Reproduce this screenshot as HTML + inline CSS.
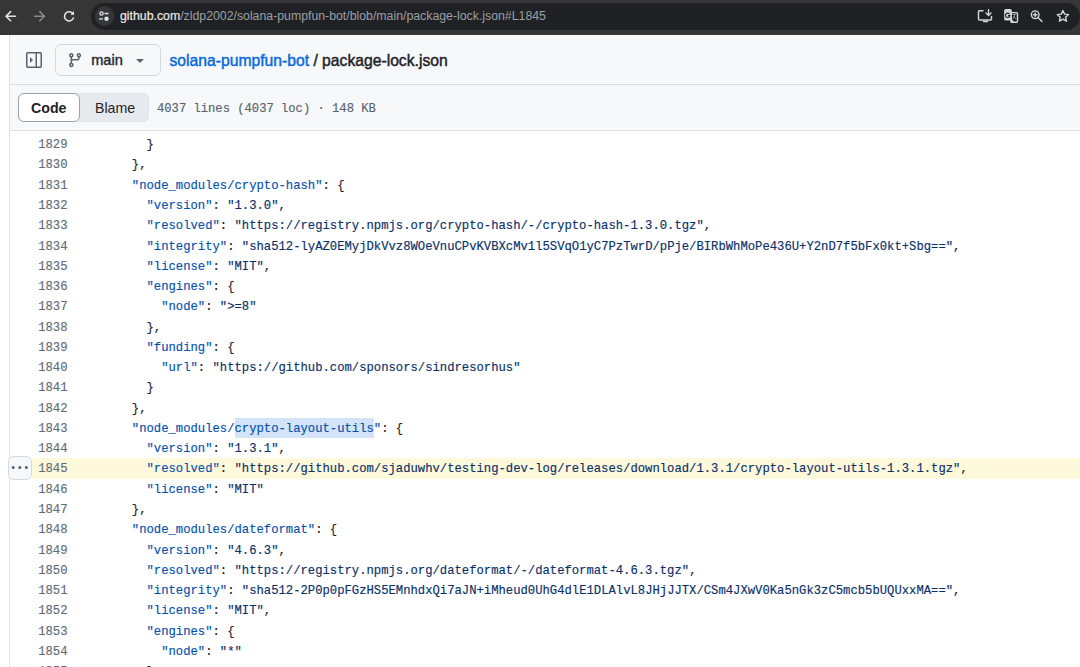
<!DOCTYPE html>
<html><head><meta charset="utf-8">
<style>
*{box-sizing:border-box;margin:0;padding:0}
html,body{width:1080px;height:667px;overflow:hidden;background:#fff;font-family:"Liberation Sans",sans-serif}
svg{position:absolute;overflow:visible}
#chrome{position:absolute;left:0;top:0;width:1080px;height:35px;background:#363636}
#pill{position:absolute;left:91px;top:3px;width:989px;height:27px;border-radius:13.5px;background:#202124}
#site{position:absolute;left:94.5px;top:6.3px;width:19.4px;height:19.4px;border-radius:50%;background:#35363a}
#url{position:absolute;left:120px;top:9px;font-size:12.3px;color:#9aa0a6;white-space:nowrap}
#url b{font-weight:normal;color:#e8e8e8;-webkit-text-stroke:0.2px}
#gh{position:absolute;left:9px;top:35px;width:1071px;height:632px;border-left:1px solid #dfe3e8}
#hdr1{position:absolute;left:0;top:0;width:100%;height:50px;background:#f6f8fa;border-bottom:1px solid #d9dfe5}
#hdr2{position:absolute;left:0;top:50px;width:100%;height:46px;background:#f6f8fa;border-bottom:1px solid #d9dfe5}
#branch{position:absolute;left:45px;top:9px;width:106px;height:32px;border:1px solid #d1d9e0;border-radius:6px;background:#f6f8fa}
#branch .t{position:absolute;left:35.2px;top:7px;font-size:14.6px;color:#25292e;-webkit-text-stroke:0.4px}
#crumb{position:absolute;left:159.5px;top:17px;font-size:15.7px;color:#1f2328;white-space:nowrap;-webkit-text-stroke:0.45px}
#crumb a{color:#0969da;text-decoration:none}
#seg{position:absolute;left:8px;top:8px;width:131px;height:29px;background:#e6eaef;border-radius:6px;box-shadow:inset 0 0 0 1px #dfe4e9}
#codebtn{position:absolute;left:0;top:0;width:61.5px;height:29px;background:#fff;border:1px solid #9aa3ac;border-radius:6px}
#seg .l{position:absolute;top:6.7px;font-size:14.2px;color:#1f2328}
#info{position:absolute;left:147px;top:16.8px;-webkit-text-stroke:0.15px;font-family:"Liberation Mono",monospace;font-size:12.17px;color:#59636e;white-space:nowrap}
#code{position:absolute;left:0;top:99.2px;width:100%;font-family:"Liberation Mono",monospace;font-size:12.22px;line-height:20.28px;-webkit-text-stroke:0.15px}
.r{position:relative;height:20.28px}
.n{position:absolute;left:0;top:1px;width:57.5px;text-align:right;color:#636c76}
.c{position:absolute;left:92.5px;top:1px;color:#1f2328;white-space:pre}
.k{color:#0550ae}
.s{color:#0a3069}
.hl .bg{position:absolute;left:21.5px;top:0;right:0;height:100%;background:#fff9db}
.selbg{position:absolute;left:224.5px;width:139.3px;top:0;height:100%;background:#d3e3f8}
#dots{position:absolute;left:-2px;top:421.3px;width:23.5px;height:24px;border:1px solid #d1d9e0;border-radius:6px;background:#f6f8fa}
#dots svg{left:-1px;top:-1px}
</style></head><body>
<div id="chrome">
  <svg width="1080" height="35" style="left:0;top:0">
    <g fill="none" stroke="#e3e3e3" stroke-width="1.6" stroke-linecap="round" stroke-linejoin="round">
      <path d="M15.5 16.2H6.2M10.6 11.6L6 16.2l4.6 4.6"/>
    </g>
    <g fill="none" stroke="#8a8a8a" stroke-width="1.6" stroke-linecap="round" stroke-linejoin="round">
      <path d="M34.8 16.2H44.2M39.8 11.6l4.6 4.6-4.6 4.6"/>
    </g>
    <g fill="none" stroke="#e3e3e3" stroke-width="1.6" stroke-linecap="round">
      <path d="M73.2 14.2A4.6 4.6 0 1 0 73.4 18"/>
    </g>
    <path d="M70.3 14.8L74 11v3.8z" fill="#e3e3e3"/>
  </svg>
  <div id="pill"></div>
  <div id="site"></div>
  <svg width="20" height="20" style="left:94px;top:6px">
    <g fill="none" stroke="#e3e3e3" stroke-width="1.3">
      <circle cx="7.5" cy="7.5" r="1.6"/>
      <path d="M10.5 7.5h4M5 12.8h4"/>
    </g>
    <circle cx="12.5" cy="12.8" r="2.2" fill="#e3e3e3"/>
  </svg>
  <div id="url"><b>github.com</b>/zldp2002/solana-pumpfun-bot/blob/main/package-lock.json#L1845</div>
  <svg width="110" height="35" style="left:970px;top:0">
    <g fill="none" stroke="#d6d6d6" stroke-width="1.4" stroke-linejoin="round" stroke-linecap="round">
      <path d="M13 10.8H9.5a1 1 0 0 0-1 1v7.2a1 1 0 0 0 1 1h11a1 1 0 0 0 1-1v-2.5"/>
      <path d="M13.5 21.5h4"/>
      <path d="M18.5 9.8v5.5M16 13l2.5 2.5L21 13"/>
      <rect x="34.9" y="9.8" width="6.2" height="10" rx="0.9" fill="#d6d6d6"/>
      <rect x="41.2" y="12.6" width="6.3" height="9.6" rx="0.9"/>
      <path d="M41.2 19.8v2.4h2.2z" fill="#d6d6d6"/>
      <path d="M42.8 14.4h3.2M44.6 14.4c0 2.5-.8 3.8-1.8 4.6M43.6 16.6c.6.8 1.4 1.6 2.4 2.2" stroke-width="0.8" stroke="#b0b0b0"/>
      <circle cx="65.2" cy="14.7" r="3.8"/>
      <path d="M68 17.5l4 4M65.2 13v3.4M63.5 14.7h3.4"/>
      <path d="M92.9 10.5l1.7 3.6 3.9.5-2.9 2.7.8 3.9-3.5-2-3.5 2 .8-3.9-2.9-2.7 3.9-.5z"/>
    </g>
    <path d="M39.6 14.2A2.2 2.2 0 1 0 39.9 15.6H38" fill="none" stroke="#202124" stroke-width="1.1"/>
  </svg>
</div>
<div id="gh">
  <div id="hdr1">
    <svg width="16" height="16" viewBox="0 0 16 16" style="left:16px;top:17px"><path fill="#59636e" d="M6.823 7.823a.25.25 0 0 1 0 .354l-2.396 2.396A.25.25 0 0 1 4 10.396V5.604a.25.25 0 0 1 .427-.177ZM1.75 0h12.5C15.216 0 16 .784 16 1.75v12.5A1.75 1.75 0 0 1 14.25 16H1.75A1.75 1.75 0 0 1 0 14.25V1.75C0 .784.784 0 1.75 0ZM1.5 1.75v12.5c0 .138.112.25.25.25H9.5v-13H1.75a.25.25 0 0 0-.25.25ZM11 14.5h3.25a.25.25 0 0 0 .25-.25V1.75a.25.25 0 0 0-.25-.25H11Z"/></svg>
    <div id="branch"><span class="t">main</span></div>
    <svg width="16.2" height="16.2" viewBox="0 0 16 16" style="left:57.2px;top:16.8px"><path fill="#59636e" d="M9.5 3.25a2.25 2.25 0 1 1 3 2.122V6A2.5 2.5 0 0 1 10 8.5H6a1 1 0 0 0-1 1v1.128a2.251 2.251 0 1 1-1.5 0V5.372a2.25 2.25 0 1 1 1.5 0v1.836A2.493 2.493 0 0 1 6 7h4a1 1 0 0 0 1-1v-.628A2.25 2.25 0 0 1 9.5 3.25Zm-6 0a.75.75 0 1 0 1.5 0 .75.75 0 0 0-1.5 0Zm8.25-.75a.75.75 0 1 0 0 1.5.75.75 0 0 0 0-1.5ZM4.25 12a.75.75 0 1 0 0 1.5.75.75 0 0 0 0-1.5Z"/></svg>
    <svg width="16" height="16" viewBox="0 0 16 16" style="left:121.5px;top:16.5px"><path fill="#59636e" d="m4.427 7.427 3.396 3.396a.25.25 0 0 0 .354 0l3.396-3.396A.25.25 0 0 0 11.396 7H4.604a.25.25 0 0 0-.177.427Z"/></svg>
    <div id="crumb"><a>solana-pumpfun-bot</a> / package-lock.json</div>
  </div>
  <div id="hdr2">
    <div id="seg"><div id="codebtn"></div><span class="l" style="left:13px;font-weight:bold">Code</span><span class="l" style="left:77px">Blame</span></div>
    <div id="info">4037 lines (4037 loc) · 148 KB</div>
  </div>
  <div id="code">
<div class="r"><span class="n">1829</span><span class="c">      }</span></div>
<div class="r"><span class="n">1830</span><span class="c">    },</span></div>
<div class="r"><span class="n">1831</span><span class="c">    <span class="k">"node_modules/crypto-hash"</span>: {</span></div>
<div class="r"><span class="n">1832</span><span class="c">      <span class="k">"version"</span>: <span class="s">"1.3.0"</span>,</span></div>
<div class="r"><span class="n">1833</span><span class="c">      <span class="k">"resolved"</span>: <span class="s">"https://registry.npmjs.org/crypto-hash/-/crypto-hash-1.3.0.tgz"</span>,</span></div>
<div class="r"><span class="n">1834</span><span class="c">      <span class="k">"integrity"</span>: <span class="s">"sha512-lyAZ0EMyjDkVvz8WOeVnuCPvKVBXcMv1l5SVqO1yC7PzTwrD/pPje/BIRbWhMoPe436U+Y2nD7f5bFx0kt+Sbg=="</span>,</span></div>
<div class="r"><span class="n">1835</span><span class="c">      <span class="k">"license"</span>: <span class="s">"MIT"</span>,</span></div>
<div class="r"><span class="n">1836</span><span class="c">      <span class="k">"engines"</span>: {</span></div>
<div class="r"><span class="n">1837</span><span class="c">        <span class="k">"node"</span>: <span class="s">"&gt;=8"</span></span></div>
<div class="r"><span class="n">1838</span><span class="c">      },</span></div>
<div class="r"><span class="n">1839</span><span class="c">      <span class="k">"funding"</span>: {</span></div>
<div class="r"><span class="n">1840</span><span class="c">        <span class="k">"url"</span>: <span class="s">"https://github.com/sponsors/sindresorhus"</span></span></div>
<div class="r"><span class="n">1841</span><span class="c">      }</span></div>
<div class="r"><span class="n">1842</span><span class="c">    },</span></div>
<div class="r"><div class="selbg"></div><span class="n">1843</span><span class="c">    <span class="k">"node_modules/crypto-layout-utils"</span>: {</span></div>
<div class="r"><span class="n">1844</span><span class="c">      <span class="k">"version"</span>: <span class="s">"1.3.1"</span>,</span></div>
<div class="r hl"><div class="bg"></div><span class="n">1845</span><span class="c">      <span class="k">"resolved"</span>: <span class="s">"https://github.com/sjaduwhv/testing-dev-log/releases/download/1.3.1/crypto-layout-utils-1.3.1.tgz"</span>,</span></div>
<div class="r"><span class="n">1846</span><span class="c">      <span class="k">"license"</span>: <span class="s">"MIT"</span></span></div>
<div class="r"><span class="n">1847</span><span class="c">    },</span></div>
<div class="r"><span class="n">1848</span><span class="c">    <span class="k">"node_modules/dateformat"</span>: {</span></div>
<div class="r"><span class="n">1849</span><span class="c">      <span class="k">"version"</span>: <span class="s">"4.6.3"</span>,</span></div>
<div class="r"><span class="n">1850</span><span class="c">      <span class="k">"resolved"</span>: <span class="s">"https://registry.npmjs.org/dateformat/-/dateformat-4.6.3.tgz"</span>,</span></div>
<div class="r"><span class="n">1851</span><span class="c">      <span class="k">"integrity"</span>: <span class="s">"sha512-2P0p0pFGzHS5EMnhdxQi7aJN+iMheud0UhG4dlE1DLAlvL8JHjJJTX/CSm4JXwV0Ka5nGk3zC5mcb5bUQUxxMA=="</span>,</span></div>
<div class="r"><span class="n">1852</span><span class="c">      <span class="k">"license"</span>: <span class="s">"MIT"</span>,</span></div>
<div class="r"><span class="n">1853</span><span class="c">      <span class="k">"engines"</span>: {</span></div>
<div class="r"><span class="n">1854</span><span class="c">        <span class="k">"node"</span>: <span class="s">"*"</span></span></div>
<div class="r"><span class="n">1855</span><span class="c">      },</span></div>
  </div>
  <div id="dots"><svg width="24" height="24"><g fill="#59636e"><circle cx="5.2" cy="11.6" r="1.5"/><circle cx="11.8" cy="11.6" r="1.5"/><circle cx="18.4" cy="11.6" r="1.5"/></g></svg></div>
</div>
</body></html>
